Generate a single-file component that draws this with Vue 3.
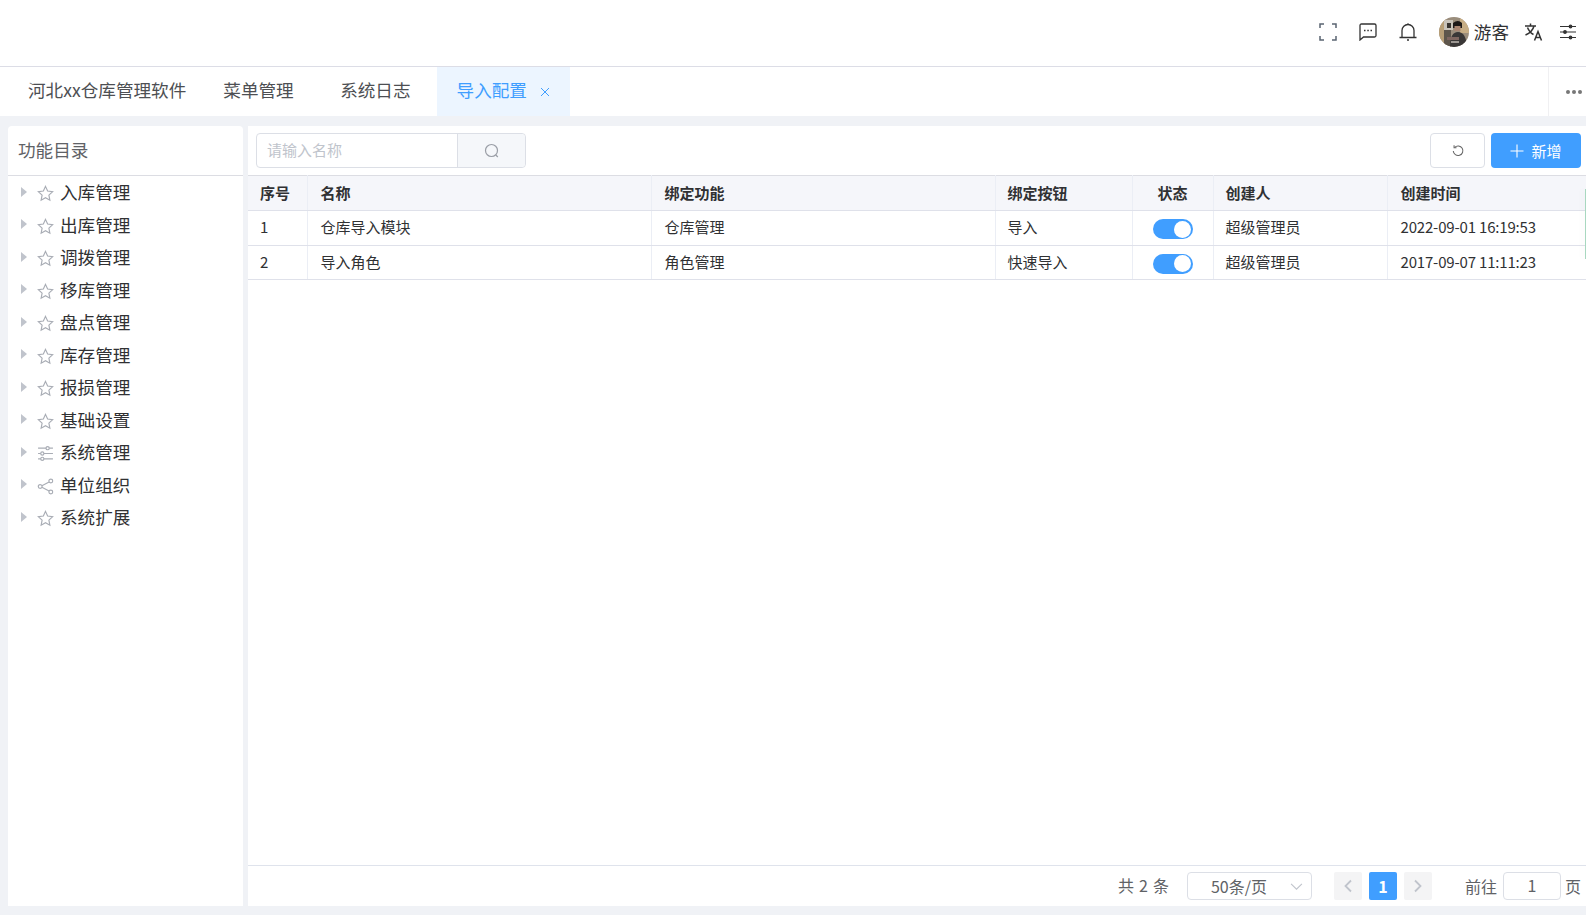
<script setup>
const menu = [
  { name: '入库管理', icon: 'star' },
  { name: '出库管理', icon: 'star' },
  { name: '调拨管理', icon: 'star' },
  { name: '移库管理', icon: 'star' },
  { name: '盘点管理', icon: 'star' },
  { name: '库存管理', icon: 'star' },
  { name: '报损管理', icon: 'star' },
  { name: '基础设置', icon: 'star' },
  { name: '系统管理', icon: 'sliders' },
  { name: '单位组织', icon: 'share' },
  { name: '系统扩展', icon: 'star' }
]
const tabs = ['菜单管理', '系统日志']
const rows = [
  { id: 1, name: '仓库导入模块', fn: '仓库管理', btn: '导入', by: '超级管理员', at: '2022-09-01 16:19:53' },
  { id: 2, name: '导入角色', fn: '角色管理', btn: '快速导入', by: '超级管理员', at: '2017-09-07 11:11:23' }
]
</script>

<template>
  <div class="page">
    <header class="topbar">
      <svg class="ti" viewBox="0 0 18 18" fill="none" stroke="#5a6472" stroke-width="1.5"><path d="M1 5V1h4M13 1h4v4M17 13v4h-4M5 17H1v-4" /></svg>
      <svg class="ti" viewBox="0 0 18 18" fill="none" stroke="#333" stroke-width="1.3"><path d="M1 2.500q0-1.500 1.500-1.500h13q1.500 0 1.500 1.500v10q0 1.500-1.500 1.500H4.500L1 17z" /><path d="M5 7.500h1.500M8.300 7.500h1.500M11.500 7.500h1.500" /></svg>
      <svg class="ti" viewBox="0 0 18 18" fill="none" stroke="#333" stroke-width="1.300"><path d="M3 14.500V7.500a6 6 0 0 1 12 0v7M.5 14.500h17M8 17h2M9 1.500V.300" /></svg>
      <svg class="avatar" viewBox="0 0 30 30">
        <defs><clipPath id="av"><circle cx="15" cy="15" r="15" /></clipPath></defs>
        <g clip-path="url(#av)">
          <rect width="30" height="30" fill="#9a8d7c" />
          <rect x="0" y="0" width="7" height="30" fill="#b89f77" />
          <rect x="5" y="3" width="9" height="10" fill="#c8c3ba" />
          <rect x="8" y="6" width="4" height="5" fill="#38342f" />
          <rect x="21" y="0" width="9" height="16" fill="#c7ae86" />
          <rect x="5" y="13" width="7" height="17" fill="#5e564c" />
          <path d="M14 6q5-4 9 0v5h-9z" fill="#1c1918" />
          <rect x="15.500" y="9" width="6" height="5" fill="#a98672" />
          <path d="M11 30q0-15 8-15t9 15z" fill="#393737" />
          <rect x="8" y="20" width="12" height="3" fill="#7e6660" />
          <rect x="12" y="24" width="8" height="2" fill="#9c9792" />
        </g>
      </svg>
      <span class="user">游客</span>
      <svg class="ti lang" viewBox="0 0 20 20" fill="none" stroke="#333" stroke-width="1.500"><path d="M1 4h11M6.500 1.500V4M10 4q-1.500 6-8.500 9M3.500 5.500q2 5 6 7M10.500 18.500l3.500-9 3.500 9M11.700 15.500h4.600" /></svg>
      <svg class="ti" viewBox="0 0 18 18" fill="#333" stroke="#333" stroke-width="1.200"><path d="M1 3.500h16M1 9h16M1 14.500h16" /><circle cx="11.500" cy="3.500" r="1.300" /><circle cx="6" cy="9" r="1.300" /><circle cx="11.500" cy="14.500" r="1.300" /></svg>
    </header>

    <nav class="tabs">
      <div class="tab home">河北xx仓库管理软件</div>
      <div v-for="t in tabs" :key="t" class="tab">{{ t }}</div>
      <div class="tab active">导入配置
        <svg class="close" viewBox="0 0 10 10" fill="none" stroke="#409eff" stroke-width="1"><path d="M1 1l8 8M9 1l-8 8" /></svg>
      </div>
      <div class="more"><i></i><i></i><i></i></div>
    </nav>

    <div class="content">
      <aside class="side">
        <div class="side-title">功能目录</div>
        <ul class="tree">
          <li v-for="m in menu" :key="m.name" class="node">
            <span class="caret"></span>
            <svg v-if="m.icon === 'star'" class="ni" viewBox="0 0 16 16" fill="none" stroke="#a9adb5" stroke-width="1.100"><path d="M8 1.300l2 4.400 4.700.6-3.500 3.200.9 4.800L8 12l-4.100 2.300.9-4.800L1.300 6.300 6 5.700z" /></svg>
            <svg v-else-if="m.icon === 'sliders'" class="ni" viewBox="0 0 16 16" fill="none" stroke="#a9adb5" stroke-width="1.100"><path d="M1 3h14M1 8h14M1 13h14" /><circle cx="10" cy="3" r="1.500" fill="#fff" /><circle cx="5" cy="8" r="1.500" fill="#fff" /><circle cx="5" cy="13" r="1.500" fill="#fff" /></svg>
            <svg v-else class="ni" viewBox="0 0 16 16" fill="none" stroke="#a9adb5" stroke-width="1.100"><circle cx="3" cy="8" r="1.800" /><circle cx="13" cy="2.800" r="1.800" /><circle cx="13" cy="13.200" r="1.800" /><path d="M4.600 7.200l6.800-3.500M4.600 8.800l6.800 3.500" /></svg>
            <span class="label">{{ m.name }}</span>
          </li>
        </ul>
      </aside>

      <main class="main">
        <div class="toolbar">
          <div class="search">
            <div class="search-input">请输入名称</div>
            <div class="search-btn">
              <svg viewBox="0 0 16 16" fill="none" stroke="#9a9ea6" stroke-width="1.200"><circle cx="7.500" cy="7.500" r="6" /><path d="M11.800 12l2 2" /></svg>
            </div>
          </div>
          <div class="actions">
            <button class="btn plain">
              <svg viewBox="0 0 16 16" fill="none" stroke="#666" stroke-width="1.200"><path d="M4.200 3.800A5.500 5.500 0 1 1 2.600 8" /><path d="M3.500 1.500v2.800h2.800" /></svg>
            </button>
            <button class="btn primary">
              <svg viewBox="0 0 14 14" fill="none" stroke="#fff" stroke-width="1.100"><path d="M7 .5v13M.5 7h13" /></svg>
              新增
            </button>
          </div>
        </div>

        <div class="table-wrap">
          <table class="grid">
            <colgroup>
              <col class="c1" /><col class="c2" /><col class="c3" /><col class="c4" /><col class="c5" /><col class="c6" /><col />
            </colgroup>
            <thead>
              <tr>
                <th>序号</th><th>名称</th><th>绑定功能</th><th>绑定按钮</th><th class="center">状态</th><th>创建人</th><th>创建时间</th>
              </tr>
            </thead>
            <tbody>
              <tr v-for="r in rows" :key="r.id">
                <td>{{ r.id }}</td>
                <td>{{ r.name }}</td>
                <td>{{ r.fn }}</td>
                <td>{{ r.btn }}</td>
                <td class="center"><span class="switch"><span class="knob"></span></span></td>
                <td>{{ r.by }}</td>
                <td class="time">{{ r.at }}</td>
              </tr>
            </tbody>
          </table>
          <div class="edge"></div>
        </div>

        <footer class="pager">
          <span class="total">共 2 条</span>
          <div class="size">
            <span>50条/页</span>
            <svg viewBox="0 0 12 12" fill="none" stroke="#c0c4cc" stroke-width="1"><path d="M1 3.500l5 5 5-5" /></svg>
          </div>
          <div class="pbtn">
            <svg viewBox="0 0 10 14" fill="none" stroke="#c0c4cc" stroke-width="1.800"><path d="M8 1.500L2.500 7 8 12.500" /></svg>
          </div>
          <div class="pbtn cur">1</div>
          <div class="pbtn">
            <svg viewBox="0 0 10 14" fill="none" stroke="#c0c4cc" stroke-width="1.800"><path d="M2 1.500L7.500 7 2 12.500" /></svg>
          </div>
          <span class="goto">前往</span>
          <div class="jump">1</div>
          <span class="unit">页</span>
        </footer>
      </main>
    </div>
  </div>
</template>

<style>
body { margin: 0; overflow: hidden; }
</style>

<style scoped>
* { box-sizing: border-box; }
.page {
  width: 1586px;
  height: 915px;
  display: flex;
  flex-direction: column;
  background: #f0f2f6;
  font-family: "Noto Sans CJK SC", "Noto Sans", sans-serif;
  color: #303133;
}
.topbar {
  height: 67px;
  flex: none;
  background: #fff;
  border-bottom: 1px solid #dcdde6;
  display: flex;
  align-items: center;
  padding: 0 9px 2px 0;
  justify-content: flex-end;
}
.ti { width: 18px; height: 18px; margin-right: 22px; flex: none; }
.lang { width: 20px; height: 20px; margin-right: 15px; margin-left: 15px; }
.ti:last-child { margin-right: 0; }
.avatar { width: 30px; height: 30px; flex: none; margin-right: 5px; }
.user { font-size: 17.600px; color: #303133; line-height: 30px; }
.tabs {
  height: 49px;
  flex: none;
  background: #fff;
  display: flex;
  align-items: stretch;
  font-size: 17.600px;
  color: #4d4f53;
  line-height: 46px;
}
.tab { padding: 0 26.500px 0 20px; }
.tab.home { padding: 0 17px 0 28px; }
.tab.active {
  background: #ecf5ff;
  color: #409eff;
  width: 133px;
  padding: 0 0 0 19.500px;
  display: flex;
  align-items: center;
  padding-bottom: 3px;
}
.close {
  width: 10px;
  height: 10px;
  margin-left: 13px;
  margin-top: 3px;
}
.more {
  margin-left: auto;
  width: 38px;
  padding-left: 12px;
  border-left: 1px solid #f0f0f2;
  display: flex;
  align-items: center;
  justify-content: center;
  gap: 2px;
}
.more i { width: 4px; height: 4px; border-radius: 50%; background: #777; }
.content {
  flex: 1;
  min-height: 0;
  display: flex;
  gap: 5px;
  padding: 10px 0 9px 8px;
}
.side {
  width: 235px;
  flex: none;
  background: #fff;
  border-radius: 4px 4px 0 0;
}
.side-title {
  height: 50px;
  border-bottom: 1px solid #dcdde3;
  padding-left: 10px;
  font-size: 17.600px;
  line-height: 48px;
  color: #606266;
}
.tree { list-style: none; margin: 0; padding: 1px 0 0; }
.node {
  height: 32.500px;
  display: flex;
  align-items: center;
  padding-left: 13px;
  font-size: 17.600px;
  color: #303133;
}
.caret {
  width: 0;
  height: 0;
  border-left: 6px solid #c0c4cc;
  border-top: 5px solid transparent;
  border-bottom: 5px solid transparent;
  margin-right: 11px;
  margin-top: -3px;
}
.ni { width: 17px; height: 17px; margin-right: 6px; margin-left: -1px; margin-top: 1px; flex: none; }
.label { line-height: 24px; margin-bottom: 2px; }
.main {
  flex: 1;
  min-width: 0;
  background: #fff;
  display: flex;
  flex-direction: column;
}
.toolbar {
  height: 49px;
  flex: none;
  display: flex;
  align-items: flex-start;
  justify-content: space-between;
  padding: 7px 5px 0 8px;
}
.search {
  display: flex;
  width: 270px;
  height: 35px;
  border: 1px solid #dcdfe6;
  border-radius: 4px;
}
.search-input {
  width: 200px;
  padding-left: 10px;
  font-size: 15px;
  line-height: 32px;
  color: #c0c4cc;
}
.search-btn {
  flex: 1;
  background: #f5f7fa;
  border-left: 1px solid #dcdfe6;
  border-radius: 0 4px 4px 0;
  display: flex;
  align-items: center;
  justify-content: center;
}
.search-btn svg { width: 16px; height: 16px; }
.actions { display: flex; gap: 6px; }
.btn {
  height: 35px;
  border-radius: 4px;
  font-family: inherit;
  font-size: 15px;
  display: flex;
  align-items: center;
  justify-content: center;
  padding: 0;
}
.btn.plain { width: 55px; background: #fff; border: 1px solid #dcdfe6; }
.btn.plain svg { width: 14px; height: 14px; }
.btn.primary { width: 90px; background: #409eff; border: none; color: #fff; gap: 7px; }
.btn.primary svg { width: 14px; height: 14px; }
.table-wrap { flex: 1; min-height: 0; position: relative; }
.edge {
  position: absolute;
  right: 0;
  top: 14px;
  width: 1px;
  height: 70px;
  background: #a8d8c0;
  box-shadow: -2px 0 6px rgba(0, 0, 0, 0.08);
}
.grid {
  width: 100%;
  border-collapse: collapse;
  table-layout: fixed;
  font-size: 15px;
  color: #303133;
}
.c1 { width: 59px; }
.c2 { width: 344px; }
.c3 { width: 344px; }
.c4 { width: 137px; }
.c5 { width: 81px; }
.c6 { width: 174px; }
th, td {
  text-align: left;
  padding: 0 12px 2px 13px;
  border-right: 1px solid #ebeef5;
  border-bottom: 1px solid #dfe1ea;
  font-size: 15px;
  white-space: nowrap;
}
th:nth-child(1), td:nth-child(1),
th:nth-child(4), td:nth-child(4),
th:nth-child(6), td:nth-child(6) { padding-left: 12px; }
th:last-child, td:last-child { border-right: none; }
.time { letter-spacing: -0.170px; }
th {
  height: 35px;
  background: #f5f6fa;
  font-weight: 700;
  color: #303133;
  border-top: 1px solid #dcdde3;
}
td { height: 34.500px; }
.center { text-align: center; padding: 0; }
th.center { padding-bottom: 2px; }
.switch {
  display: inline-block;
  vertical-align: middle;
  position: relative;
  width: 40px;
  height: 20px;
  border-radius: 10px;
  background: #409eff;
}
.knob {
  position: absolute;
  top: 1.500px;
  right: 1.500px;
  width: 17px;
  height: 17px;
  border-radius: 50%;
  background: #fff;
}
.pager {
  height: 41px;
  flex: none;
  border-top: 1px solid #dfe3ec;
  display: flex;
  align-items: center;
  padding-right: 5px;
  justify-content: flex-end;
  font-size: 16px;
  color: #606266;
}
.total { margin-right: 18px; word-spacing: 1.500px; margin-top: -2px; }
.size {
  width: 125px;
  height: 28px;
  border: 1px solid #dcdfe6;
  border-radius: 4px;
  display: flex;
  align-items: center;
  justify-content: space-between;
  padding: 0 8px 0 23px;
  margin-right: 22px;
}
.size svg { width: 13px; height: 13px; }
.pbtn {
  width: 28px;
  height: 28px;
  border-radius: 2px;
  background: #f4f4f5;
  display: flex;
  align-items: center;
  justify-content: center;
  margin-right: 7px;
}
.pbtn svg { width: 10px; height: 14px; }
.pbtn.cur { background: #409eff; color: #fff; font-weight: 700; }
.goto { margin-left: 26px; margin-right: 6px; }
.jump {
  width: 58px;
  height: 28px;
  border: 1px solid #dcdfe6;
  border-radius: 4px;
  text-align: center;
  line-height: 25px;
}
.unit { margin-left: 4px; }
</style>
